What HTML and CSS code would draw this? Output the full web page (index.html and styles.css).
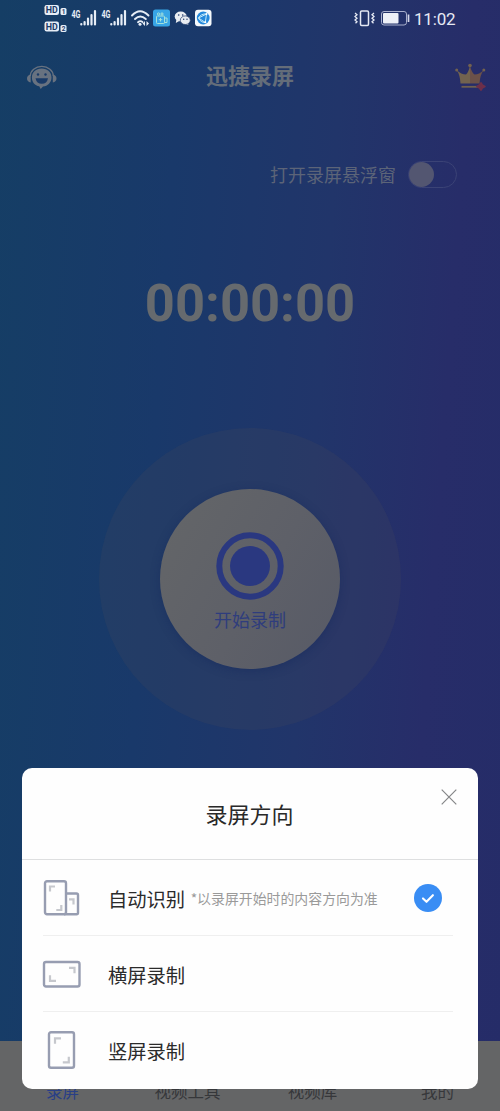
FILE: index.html
```html
<!DOCTYPE html>
<html lang="zh-CN">
<head>
<meta charset="utf-8">
<title>迅捷录屏</title>
<link rel="stylesheet" href="styles.css">
</head>
<body>
<div class="screen">
  <div class="status">
    <svg class="status-left" width="176" height="38" viewBox="40 0 176 38">
      <g fill="#e6edf6">
        <rect x="44.5" y="5" width="14.5" height="10" rx="2.2"/>
        <rect x="44.5" y="21.500" width="14.5" height="10" rx="2.2"/>
        <rect x="60.5" y="8" width="6" height="7" rx="1.5"/>
        <rect x="60.5" y="25" width="6" height="7" rx="1.5"/>
      </g>
      <g class="tiny" fill="#1b3a68">
        <text x="45.700" y="13.400" font-size="9.5" textLength="12" lengthAdjust="spacingAndGlyphs">HD</text>
        <text x="45.700" y="30" font-size="9.5" textLength="12" lengthAdjust="spacingAndGlyphs">HD</text>
        <text x="61.800" y="14" font-size="6.500">1</text>
        <text x="61.800" y="31" font-size="6.500">2</text>
      </g>
      <g class="tiny" fill="#e6edf6">
        <text x="71.500" y="17.500" font-size="10" textLength="9" lengthAdjust="spacingAndGlyphs">4G</text>
        <text x="101.500" y="17.500" font-size="10" textLength="9" lengthAdjust="spacingAndGlyphs">4G</text>
      </g>
      <g stroke="#e6edf6" stroke-width="2.200" stroke-linecap="round">
        <path d="M81.300 24v.5M84.600 22v2.500M88 18.500v6M91.500 15v9.500M95 11v13.500"/>
        <path d="M111.300 24v.5M114.600 22v2.500M118 18.500v6M121.500 15v9.500M125 11v13.500"/>
      </g>
      <g fill="none" stroke="#e6edf6" stroke-width="1.900" stroke-linecap="round">
        <path d="M132 15.500q8-8.500 16.500 0M135 19q5.200-5.200 10.800 0M138 22.200q2.300-2 4.500-.3"/>
      </g>
      <circle cx="140" cy="24.300" r="1.500" fill="#e6edf6"/>
      <path d="M145 21v5l-2.500-2.500zM146.500 21v5l2.500-2.500z" fill="#e6edf6"/>
      <rect x="153" y="9.500" width="17" height="17" rx="2.500" fill="#37a5e6"/>
      <g fill="none" stroke="#a5e3dc" stroke-width="1">
        <rect x="156.500" y="16" width="8" height="7.500" rx=".8"/>
        <path d="M164.500 18h2.500v4.500h-2.500M160.500 18v3.500M158.800 19.700h3.500"/>
        <circle cx="158.500" cy="14" r="1.100"/><circle cx="162" cy="14" r="1.100"/>
      </g>
      <ellipse cx="180.700" cy="16.500" rx="6" ry="5" fill="#e9edf2"/>
      <path d="M176.500 19l-.7 4 3.500-2zM187 22l1.500 3-4-1.200z" fill="#e9edf2"/>
      <ellipse cx="185.300" cy="20.200" rx="5" ry="4.300" fill="#e9edf2" stroke="#1d3767" stroke-width=".7"/>
      <g fill="#1d3767"><circle cx="178.700" cy="15" r=".8"/><circle cx="182.700" cy="15" r=".8"/><circle cx="183.700" cy="19.200" r=".7"/><circle cx="187" cy="19.200" r=".7"/></g>
      <rect x="195" y="9.700" width="16.500" height="16.600" rx="3" fill="#f5f9fc"/>
      <circle cx="203.200" cy="18" r="6.400" fill="#2489dc"/>
      <path d="M198.500 18l8-4-1.200 8.500zM206.500 14q-5.500-.5-8 4M198.500 18q2 4.500 6.800 4.500" fill="none" stroke="#c3eafa" stroke-width="1"/>
      <circle cx="206.500" cy="14" r="1" fill="#fff"/><circle cx="205.300" cy="22.300" r="1" fill="#fff"/>
    </svg>
    <div class="status-right">
      <svg width="56" height="20" viewBox="354 9 56 20">
        <rect x="360.500" y="11" width="8" height="14.500" rx="1.200" fill="none" stroke="#e4e8f3" stroke-width="1.500"/>
        <path d="M355 13l2 1.700-2 1.800 2 1.700-2 1.800 2 1.700-1.500 1.500M374 13l-2 1.700 2 1.800-2 1.700 2 1.800-2 1.700 1.500 1.500" fill="none" stroke="#e4e8f3" stroke-width="1.300"/>
        <rect x="381.500" y="11.500" width="25" height="13.500" rx="2.500" fill="none" stroke="#a9b0cd"/>
        <rect x="383" y="13" width="15.500" height="10.500" rx="1" fill="#edf0f7"/>
        <path d="M408.500 14.500v7.500" stroke="#d4d8e8" stroke-width="1.700"/>
      </svg>
      <span class="clock">11:02</span>
    </div>
  </div>

  <header class="header">
    <svg width="30" height="26" viewBox="27 64 30 26">
      <path d="M30.300 76a11.500 9.700 0 0 1 23 0" fill="none" stroke="#687280" stroke-width="1.300"/>
      <path d="M30.700 74.500v8q-3.700-.8-3.700-4t3.700-4zM52.800 74.500v8q3.700-.8 3.700-4t-3.700-4z" fill="#687280"/>
      <path d="M41.700 68.500c5.700 0 9.800 3.800 9.800 8.900 0 4.800-3.700 8.600-8.500 9.100l-2.300 2.400-1.500-2.600c-4.200-.8-7.300-4.200-7.300-8.900 0-5.100 4.100-8.900 9.800-8.900z" fill="#687280"/>
      <circle cx="38" cy="74.500" r="1.200" fill="#1a3b68"/><circle cx="45.500" cy="74.500" r="1.200" fill="#1a3b68"/>
      <path d="M35.500 78.300h12.500q-1 5.500-6.200 5.500t-6.300-5.500z" fill="#1a3b68"/>
    </svg>
    <h1 class="title">迅捷录屏</h1>
    <svg width="32" height="30" viewBox="454 62 32 30">
      <path d="M460.500 84.500q-.5-9-4-13.500 5 4.500 9.500 4.500 2.500-2 4-9v18z" fill="#72634f"/>
      <path d="M479.500 84.500q.5-9 4.500-13.500-5 4.500-9.500 4.500-3-2-4.500-9v18z" fill="#6b5149"/>
      <g fill="#72614f"><circle cx="456.700" cy="71" r="1.500"/><circle cx="470" cy="66.500" r="1.800"/><circle cx="483.800" cy="71" r="1.500"/></g>
      <path d="M461.500 87.800h17" stroke="#6f604f" stroke-width="1.800"/>
      <path d="M481 84l1.200 2 2.600 1.500-2.600 1.500-1.200 2-1.500-2-2.500-1.500 2.500-1.500z" fill="#6d2f4a" stroke="#6d2f4a" stroke-width="1.800" stroke-linejoin="round"/>
    </svg>
  </header>

  <div class="float-row">
    <span>打开录屏悬浮窗</span>
    <span class="switch"><i class="knob"></i></span>
  </div>

  <div class="timer">00:00:00</div>

  <div class="halo">
    <div class="record">
      <svg width="68" height="68" viewBox="0 0 68 68">
        <circle cx="34" cy="34" r="30.700" fill="none" stroke="#2a3880" stroke-width="6"/>
        <circle cx="34" cy="34" r="20" fill="#2a3880"/>
      </svg>
      <span>开始录制</span>
    </div>
  </div>

  <nav class="tabs">
    <span class="tab active">录屏</span>
    <span class="tab">视频工具</span>
    <span class="tab">视频库</span>
    <span class="tab">我的</span>
  </nav>

  <section class="dialog">
    <div class="dialog-head">
      <h2>录屏方向</h2>
      <svg class="close" width="16" height="16" viewBox="0 0 16 16"><path d="M.7.700l14.600 14.600M15.300.700L.7 15.300" stroke="#858688" stroke-width="1.200"/></svg>
    </div>
    <div class="option">
      <svg class="icon" width="40" height="40" viewBox="0 0 40 40">
        <g fill="none" stroke="#979db1" stroke-width="2.400">
          <rect x="3" y="3.200" width="21" height="33" rx="2"/>
          <path d="M24 15.500h10.500q1.500 0 1.500 1.500v17.700q0 1.500-1.500 1.500H22"/>
        </g>
        <path d="M8 13.500V8.500h5M19.300 27v5h-5M27 21.300h4.500v5.200" fill="none" stroke="#c6c8cd" stroke-width="2.200"/>
      </svg>
      <span class="name">自动识别</span>
      <span class="note">*以录屏开始时的内容方向为准</span>
      <span class="check"><svg width="28" height="28" viewBox="0 0 28 28"><path d="M9 14.400l3.500 3.400 6.400-6.600" fill="none" stroke="#fff" stroke-width="2.100" stroke-linecap="round" stroke-linejoin="round"/></svg></span>
    </div>
    <div class="option">
      <svg class="icon" width="40" height="40" viewBox="0 0 40 40">
        <rect x="2" y="8" width="35.500" height="24.500" rx="2" fill="none" stroke="#979db1" stroke-width="2.400"/>
        <path d="M8 21.300v5.500h6M27 13.800h5.500v5.500" fill="none" stroke="#c6c8cd" stroke-width="2.200"/>
      </svg>
      <span class="name">横屏录制</span>
    </div>
    <div class="option">
      <svg class="icon" width="40" height="40" viewBox="0 0 40 40">
        <rect x="7" y="2.300" width="25" height="35.500" rx="2" fill="none" stroke="#979db1" stroke-width="2.400"/>
        <path d="M13 13.800V8.300h6M26.800 26.800v5.500h-6" fill="none" stroke="#c6c8cd" stroke-width="2.200"/>
      </svg>
      <span class="name">竖屏录制</span>
    </div>
  </section>
</div>
</body>
</html>
```
FILE: styles.css
```css
* { box-sizing: border-box; }
body {
  margin: 0;
  font-family: "Noto Sans CJK SC", sans-serif;
}
h1, h2 { margin: 0; }
svg { display: block; flex: none; }
.screen {
  position: relative;
  width: 500px;
  height: 1111px;
  overflow: hidden;
  display: flex;
  flex-direction: column;
  align-items: center;
  background: linear-gradient(94deg, #153e65 0%, #19396a 32%, #21356a 60%, #272d69 82%, #252c68 100%);
}
.status {
  align-self: stretch;
  height: 38px;
  padding: 0 44px 0 40px;
  display: flex;
  justify-content: space-between;
  align-items: center;
  flex: none;
}
.tiny { font-family: Roboto, sans-serif; font-weight: 700; }
.status-right {
  display: flex;
  align-items: center;
  gap: 4px;
  padding-bottom: 1px;
}
.clock {
  font: 400 17px/20px Roboto, sans-serif;
  letter-spacing: -.2px;
  width: 42px;
  color: #e6e9f4;
}
.header {
  align-self: stretch;
  height: 76px;
  padding: 0 14px 0 27px;
  display: grid;
  grid-template-columns: 30px 1fr 32px;
  align-items: center;
  flex: none;
}
.header > svg:first-child { margin-top: 2px; }
.title {
  font-size: 22px;
  line-height: 32px;
  font-weight: 700;
  color: #646d79;
  text-align: center;
  padding: 0 11px 4px 0;
}
.float-row {
  align-self: flex-end;
  margin: 46px 43px 0 0;
  display: flex;
  align-items: center;
  gap: 12px;
  height: 28px;
  font-size: 18px;
  color: #5c6478;
}
.switch {
  width: 49px;
  height: 27px;
  border: 1px solid #3b4376;
  border-radius: 14px;
}
.knob {
  display: block;
  width: 25px;
  height: 25px;
  border-radius: 50%;
  background: #535671;
}
.timer {
  margin-top: 83px;
  font: 700 52.500px/64px Roboto, sans-serif;
  color: #666a6e;
}
.halo {
  margin-top: 93px;
  width: 302px;
  height: 302px;
  border-radius: 50%;
  background: rgba(75, 75, 90, .2);
  display: flex;
  align-items: center;
  justify-content: center;
  flex: none;
}
.record {
  width: 180px;
  height: 180px;
  border-radius: 50%;
  background: linear-gradient(120deg, #646668, #5e6068 55%, #575a66);
  box-shadow: 0 2px 10px rgba(20, 40, 90, .45);
  padding-top: 43px;
  display: flex;
  flex-direction: column;
  align-items: center;
  gap: 5px;
  font-size: 18px;
  line-height: 28px;
  color: #2f3d7d;
}
.tabs {
  align-self: stretch;
  height: 70px;
  margin-top: auto;
  background: #646566;
  display: grid;
  grid-template-columns: repeat(4, 125px);
  align-items: end;
  text-align: center;
  padding-bottom: 8px;
  font-size: 16.500px;
  line-height: 24px;
  color: #36373a;
}
.active { color: #293f86; }
.dialog {
  position: absolute;
  left: 22px;
  top: 768px;
  width: 456px;
  height: 321px;
  border-radius: 10px;
  background: #fefefe;
}
.dialog-head {
  position: relative;
  height: 92px;
  border-bottom: 1px solid #dedfe0;
  display: flex;
  align-items: center;
  justify-content: center;
}
.dialog-head h2 {
  font-size: 22px;
  font-weight: 400;
  color: #292929;
  padding: 0 1px 2px 0;
}
.close { position: absolute; right: 21px; top: 21px; }
.option {
  height: 76px;
  margin: 0 25px 0 21px;
  border-bottom: 1px solid #efefef;
  display: flex;
  align-items: center;
}
.option:last-child { border-bottom: 0; }
.icon { margin-left: -1px; }
.name {
  margin-left: 26px;
  padding-top: 2px;
  font-size: 19.300px;
  color: #2b2b2b;
}
.note {
  margin-left: 5.500px;
  font-size: 13.900px;
  color: #9a9a9a;
}
.check {
  margin-left: auto;
  margin-right: 11px;
  width: 28px;
  height: 28px;
  border-radius: 50%;
  background: #398df4;
}
```
